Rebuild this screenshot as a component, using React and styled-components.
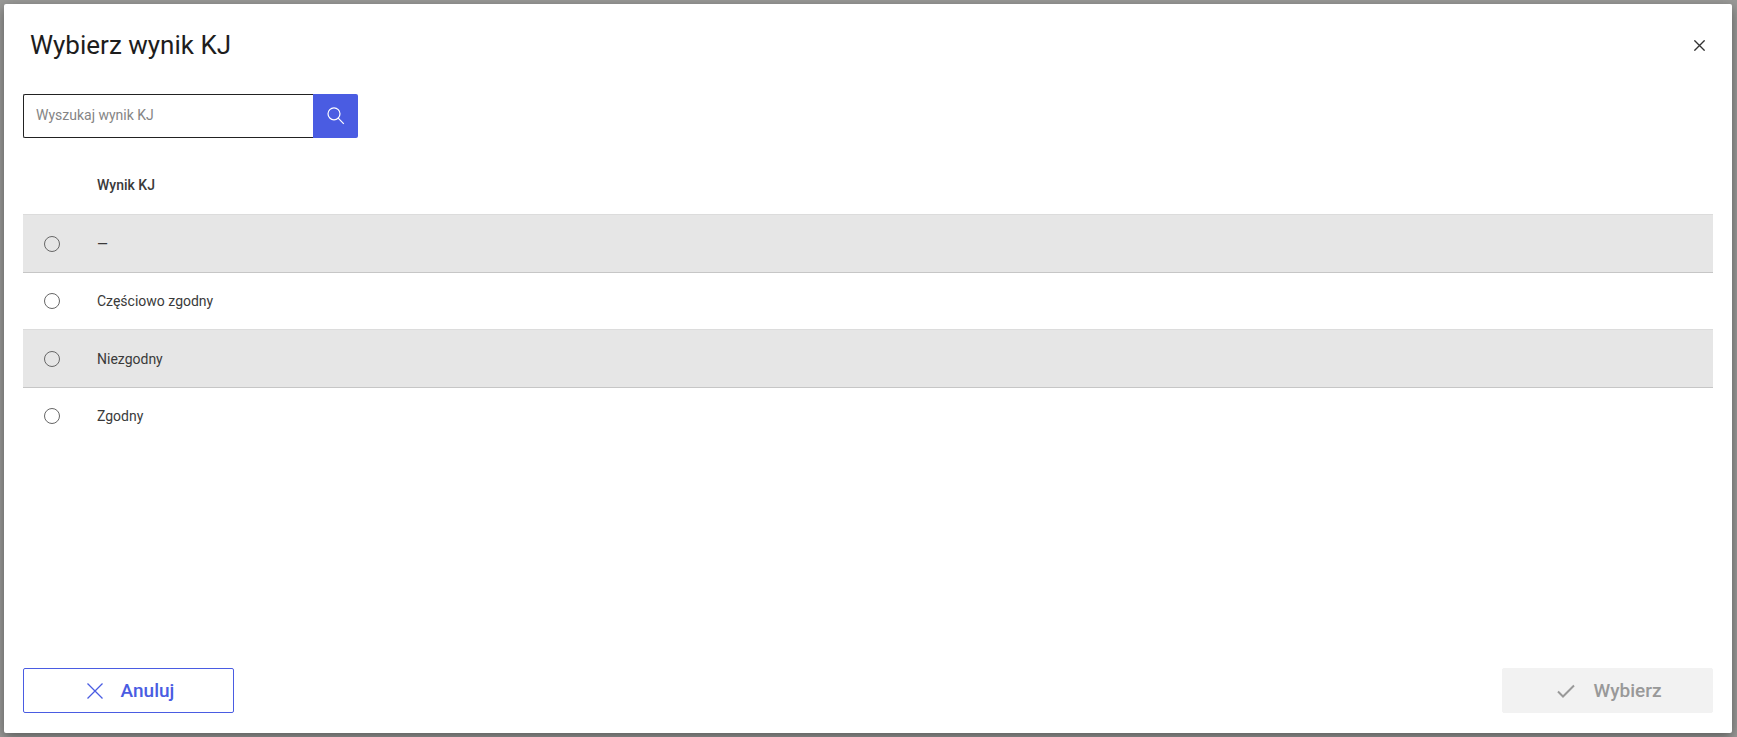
import React, { useState } from 'react';
import styled, { createGlobalStyle } from 'styled-components';

const GlobalStyle = createGlobalStyle`
  * {
    box-sizing: border-box;
  }

  body {
    margin: 0;
    background: #999997;
    font-family: Roboto, 'Liberation Sans', sans-serif;
    color: #3a3a3a;
  }

  button,
  input {
    font-family: inherit;
  }
`;

const Overlay = styled.div`
  display: flex;
  min-height: 100vh;
  padding: 4px 5px 4px 4px;
`;

const Dialog = styled.div`
  display: flex;
  flex-direction: column;
  flex: 1;
  padding: 20px 19px;
  background: #fff;
  border-radius: 2px;
  box-shadow: 0 4px 12px rgba(0, 0, 0, 0.4);
`;

const Header = styled.header`
  display: flex;
  align-items: center;
  justify-content: space-between;
  height: 42px;
  padding: 0 8px 0 7px;
`;

const Title = styled.h1`
  margin: 0;
  font-size: 26px;
  font-weight: 400;
  line-height: 32px;
  color: #1d1d1d;
`;

const CloseButton = styled.button`
  display: flex;
  padding: 0;
  border: none;
  background: none;
  color: #333;
  cursor: pointer;
`;

const SearchForm = styled.form`
  display: flex;
  width: 335px;
  height: 44px;
  margin-top: 28px;
`;

const SearchInput = styled.input`
  flex: 1;
  min-width: 0;
  padding: 0 12px 2px;
  border: 1px solid #222;
  border-right: none;
  border-radius: 2px 0 0 2px;
  font-size: 14px;
  color: #333;
  outline: none;

  &::placeholder {
    color: #858585;
  }
`;

const SearchButton = styled.button`
  display: flex;
  align-items: center;
  justify-content: center;
  width: 45px;
  padding: 0;
  border: none;
  border-radius: 0 2px 2px 0;
  background: #4a5ce2;
  color: #fff;
  cursor: pointer;
`;

const Table = styled.table`
  width: 100%;
  margin-top: 18px;
  border-collapse: separate;
  border-spacing: 0;
  table-layout: fixed;
  font-size: 14px;
  line-height: 20px;
`;

const HeadCell = styled.th`
  width: ${(props) => (props.$narrow ? '58px' : 'auto')};
  height: 58px;
  padding: 0 16px;
  font-weight: 500;
  text-align: left;
`;

const Row = styled.tr`
  cursor: pointer;

  td {
    height: 56px;
  }

  &:nth-child(odd) td {
    height: 59px;
    background: #e6e6e6;
    border-top: 1px solid #dcdcdc;
    border-bottom: 1px solid #c6c6c6;
  }
`;

const Cell = styled.td`
  padding: 0 16px;
`;

const RadioCell = styled.td`
  padding: 0 0 0 21px;
`;

const Radio = styled.input`
  display: block;
  appearance: none;
  width: 16px;
  height: 16px;
  margin: 0;
  border: 1px solid #666;
  border-radius: 50%;
  background: transparent;

  &:checked {
    border: 5px solid #4a5ce2;
  }
`;

const Footer = styled.footer`
  display: flex;
  justify-content: space-between;
  margin-top: auto;
`;

const ActionButton = styled.button`
  display: flex;
  align-items: center;
  justify-content: center;
  gap: 18px;
  width: 211px;
  height: 45px;
  padding: 0 0 0 4px;
  border: 1px solid #4a5ce2;
  border-radius: 2px;
  background: #fff;
  font-size: 19px;
  font-weight: 500;
  line-height: 24px;
  color: #4a5ce2;
  cursor: pointer;

  &:disabled {
    border-color: #f2f2f2;
    background: #f2f2f2;
    color: #999;
    cursor: default;
  }
`;

const CrossIcon = ({ size, strokeWidth }) => (
  <svg width={size} height={size} viewBox="0 0 16 16" fill="none" stroke="currentColor" strokeWidth={strokeWidth} aria-hidden="true">
    <path d="M0.5 0.5l15 15M15.5 0.5l-15 15" />
  </svg>
);

const SearchIcon = () => (
  <svg width="18" height="18" viewBox="0 0 18 18" fill="none" stroke="currentColor" strokeWidth="1.2" aria-hidden="true">
    <circle cx="7" cy="6.8" r="6" />
    <path d="M11.2 11.1l5.6 5.8" />
  </svg>
);

const CheckIcon = () => (
  <svg width="18" height="16" viewBox="0 0 18 16" fill="none" stroke="currentColor" strokeWidth="2" aria-hidden="true">
    <path d="M1 8.5l5 5L17 2.5" />
  </svg>
);

const results = ['—', 'Częściowo zgodny', 'Niezgodny', 'Zgodny'];

const App = () => {
  const [query, setQuery] = useState('');
  const [selected, setSelected] = useState(null);

  const visible = results.filter((name) => name.toLowerCase().includes(query.toLowerCase()));

  return (
    <Overlay>
      <GlobalStyle />
      <Dialog role="dialog" aria-labelledby="dialog-title">
        <Header>
          <Title id="dialog-title">Wybierz wynik KJ</Title>
          <CloseButton type="button" aria-label="Zamknij">
            <CrossIcon size={11} strokeWidth={2} />
          </CloseButton>
        </Header>
        <SearchForm onSubmit={(e) => e.preventDefault()}>
          <SearchInput
            type="text"
            value={query}
            onChange={(e) => setQuery(e.target.value)}
            placeholder="Wyszukaj wynik KJ"
            aria-label="Wyszukaj wynik KJ"
          />
          <SearchButton type="submit" aria-label="Szukaj">
            <SearchIcon />
          </SearchButton>
        </SearchForm>
        <Table>
          <thead>
            <tr>
              <HeadCell $narrow />
              <HeadCell scope="col">Wynik KJ</HeadCell>
            </tr>
          </thead>
          <tbody>
            {visible.map((name, index) => (
              <Row key={name} onClick={() => setSelected(name)}>
                <RadioCell>
                  <Radio
                    type="radio"
                    name="result"
                    checked={selected === name}
                    onChange={() => setSelected(name)}
                    aria-labelledby={`result-${index}`}
                  />
                </RadioCell>
                <Cell id={`result-${index}`}>{name}</Cell>
              </Row>
            ))}
          </tbody>
        </Table>
        <Footer>
          <ActionButton type="button">
            <CrossIcon size={16} strokeWidth={1.3} />
            Anuluj
          </ActionButton>
          <ActionButton type="button" disabled={selected === null}>
            <CheckIcon />
            Wybierz
          </ActionButton>
        </Footer>
      </Dialog>
    </Overlay>
  );
};

export default App;
